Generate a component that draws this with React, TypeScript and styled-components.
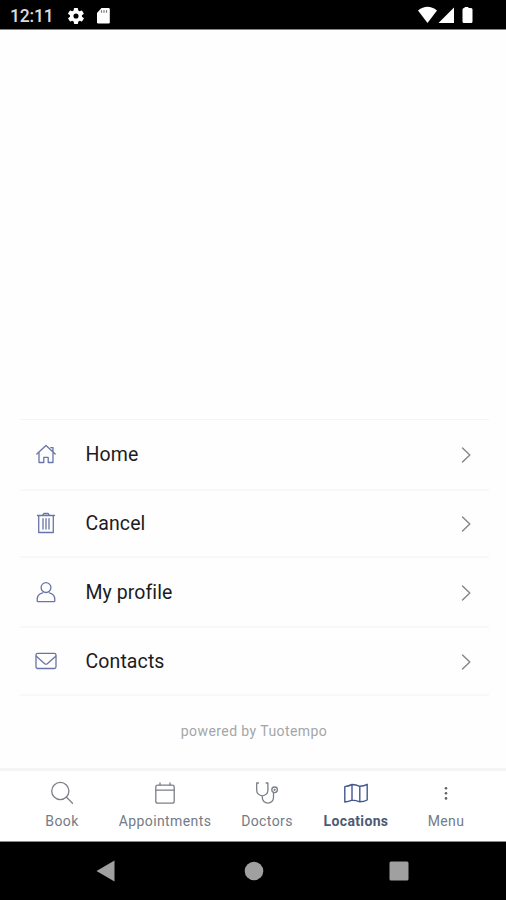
import React from "react";
import styled, { createGlobalStyle } from "styled-components";

const GlobalStyle = createGlobalStyle`
  * { box-sizing: border-box; }
  body { margin: 0; background: #fff; font-family: Roboto, "Liberation Sans", sans-serif; }
`;

const Screen = styled.div`
  display: flex;
  flex-direction: column;
  width: 506px;
  height: 900px;
  overflow: hidden;
  background: #fefefe;
`;

const StatusBar = styled.header`
  display: flex;
  justify-content: space-between;
  flex: 0 0 30px;
  height: 30px;
  background: #000;
  border-bottom: 1px solid #858585;
`;

const StatusLeft = styled.div`
  display: flex;
  align-items: center;
  padding: 2px 0 0 10px;
`;

const Clock = styled.span`
  width: 58px;
  color: #dcdcdc;
  font-size: 17.5px;
  font-weight: 500;
  line-height: 20px;
  letter-spacing: -0.2px;
`;

const Icon = styled.svg`
  display: block;
  flex: none;
  overflow: visible;
`;

const LineIcon = styled(Icon)`
  fill: none;
  stroke: currentColor;
  stroke-linecap: round;
  stroke-linejoin: round;
`;

const Content = styled.main`
  display: flex;
  flex-direction: column;
  justify-content: flex-end;
  flex: 1;
`;

const MenuList = styled.ul`
  list-style: none;
  margin: 0;
  padding: 0 17px 0 20px;
`;

const MenuRow = styled.li<{ $height: number; $first?: boolean }>`
  display: flex;
  align-items: center;
  height: ${(p) => p.$height}px;
  padding: 0 17px 0 14px;
  border-bottom: 2px solid #f8f8f8;
  ${(p) => p.$first && "border-top: 1px solid #f4f4f4;"}
`;

const RowIcon = styled.span`
  display: flex;
  width: 51.5px;
  padding-bottom: 1px;
  color: #6974a8;
`;

const RowLabel = styled.span<{ $spacing: number }>`
  flex: 1;
  padding-top: 1px;
  color: #1c1c1e;
  font-size: 19.5px;
  line-height: 24px;
  letter-spacing: ${(p) => p.$spacing}px;
`;

const Chevron = styled.span`
  display: flex;
  padding-top: 1px;
  color: #858585;
`;

const Powered = styled.p`
  height: 72px;
  margin: 0;
  padding: 25px 0 0 2px;
  color: #a3a6a8;
  font-size: 14px;
  line-height: 20px;
  letter-spacing: 0.43px;
  text-align: center;
`;

const TabBar = styled.nav`
  display: grid;
  grid-template-columns: 104px 102px 102px 76px 104px;
  flex: 0 0 74px;
  padding: 10px 0 0 10px;
  background: #fff;
  border-top: 3px solid #f4f4f4;
  border-bottom: 1px solid #8a8a8a;
`;

const Tab = styled.div<{ $active?: boolean }>`
  display: flex;
  flex-direction: column;
  align-items: center;
  gap: 7px;
  color: ${(p) => (p.$active ? "#44578f" : "#7b7f86")};
`;

const TabLabel = styled.span<{ $active?: boolean; $spacing: number }>`
  color: ${(p) => (p.$active ? "#4d5a75" : "#737b86")};
  font-size: 14px;
  font-weight: ${(p) => (p.$active ? 700 : 400)};
  line-height: 18px;
  letter-spacing: ${(p) => p.$spacing}px;
  white-space: nowrap;
`;

const SystemNav = styled.footer`
  display: flex;
  align-items: center;
  justify-content: space-between;
  flex: 0 0 58px;
  padding: 0 97px 0 96px;
  background: #000;
  color: #a0a0a0;
`;

const HomeIcon = () => (
  <LineIcon width="24" height="24" viewBox="0 0 24 24" strokeWidth="1.3">
    <path d="M2.800 12 12 3.500l9.200 8.500M5 10.500v10h4.800v-5.200h4.400v5.200H19v-10M16.800 5.600h2.200v3.800" />
  </LineIcon>
);

const TrashIcon = () => (
  <LineIcon width="24" height="24" viewBox="0 0 24 24" strokeWidth="1.3">
    <path d="M3.500 4.500h17M8.700 4.200 9.800 2.500h4.400l1.100 1.700M4.700 4.500v17h14.600v-17M9 7.700v10.300M12 7.700v10.300M15 7.700v10.300" />
  </LineIcon>
);

const ProfileIcon = () => (
  <LineIcon width="24" height="24" viewBox="0 0 24 24" strokeWidth="1.3">
    <circle cx="12" cy="7.600" r="4.900" />
    <path d="M8.700 12.900C5.200 13.600 3.200 16 3.200 19.500v1.200q0 .9.900.900h15.800q.9 0 .9-.900v-1.200c0-3.500-2-5.900-5.500-6.600" />
  </LineIcon>
);

const MailIcon = () => (
  <LineIcon width="24" height="24" viewBox="0 0 24 24" strokeWidth="1.3">
    <rect x="2" y="4.300" width="20" height="15.200" rx="1.800" />
    <path d="m2.300 7.300 8.400 7.400q1.300 1 2.600 0l8.400-7.400" />
  </LineIcon>
);

const SearchIcon = () => (
  <LineIcon width="24" height="24" viewBox="0 0 24 24" strokeWidth="1.3">
    <circle cx="10.300" cy="10" r="8.600" />
    <path d="m16.500 16.200 6 6" />
  </LineIcon>
);

const CalendarIcon = () => (
  <LineIcon width="24" height="24" viewBox="0 0 24 24" strokeWidth="1.3">
    <rect x="2.800" y="4.200" width="18.400" height="18" rx="2" />
    <path d="M2.800 9.200h18.400M7 2v2.200M17 2v2.200" />
  </LineIcon>
);

const StethoscopeIcon = () => (
  <LineIcon width="24" height="24" viewBox="0 0 24 24" strokeWidth="1.3">
    <path d="M3.500 2H1.700v7.200a5.600 5.600 0 0 0 11.200 0V2h-1.800M7.300 14.800v1.700a5.600 5.600 0 0 0 11.200 0v-4.800" />
    <circle cx="19.600" cy="8.800" r="2.800" />
    <circle cx="19.600" cy="8.800" r=".5" />
  </LineIcon>
);

const MapIcon = () => (
  <LineIcon width="24" height="24" viewBox="0 0 24 24" strokeWidth="1.400">
    <path d="M.8 5.600Q4.500 5.200 8 3.500Q12 3.800 15.800 5.300Q20 5 23.200 3.300V19Q20 20.800 15.800 20.800Q12 19.400 8 19.100Q4.500 20.600.8 21zM8 3.500v15.600M15.800 5.300v15.500" />
  </LineIcon>
);

const DotsIcon = () => (
  <Icon width="24" height="24" viewBox="0 0 24 24" fill="#5f6368">
    <circle cx="12" cy="7.200" r="1.300" />
    <circle cx="12" cy="12.300" r="1.300" />
    <circle cx="12" cy="17.400" r="1.300" />
  </Icon>
);

const menu = [
  { label: "Home", icon: <HomeIcon />, height: 72, spacing: 0.1 },
  { label: "Cancel", icon: <TrashIcon />, height: 67, spacing: 0.1 },
  { label: "My profile", icon: <ProfileIcon />, height: 70, spacing: 0.07 },
  { label: "Contacts", icon: <MailIcon />, height: 68, spacing: 0.1 },
];

const tabs = [
  { label: "Book", icon: <SearchIcon />, spacing: 0.4 },
  { label: "Appointments", icon: <CalendarIcon />, spacing: 0.4 },
  { label: "Doctors", icon: <StethoscopeIcon />, spacing: 0.4 },
  { label: "Locations", icon: <MapIcon />, spacing: 0.35, active: true },
  { label: "Menu", icon: <DotsIcon />, spacing: 0.4 },
];

export default function App() {
  return (
    <>
      <GlobalStyle />
      <Screen>
        <StatusBar>
          <StatusLeft>
            <Clock>12:11</Clock>
            <Icon width="16" height="16" viewBox="2 2 20 20" fill="#fff">
              <path d="M19.400 13a7.500 7.500 0 0 0 0-2l2.100-1.600a.5.5 0 0 0 .1-.7l-2-3.400a.5.5 0 0 0-.6-.2l-2.500 1a7 7 0 0 0-1.700-1l-.4-2.600a.5.5 0 0 0-.5-.5h-4a.5.5 0 0 0-.5.5L9 5.100a7 7 0 0 0-1.700 1l-2.500-1a.5.5 0 0 0-.6.200l-2 3.400a.5.5 0 0 0 .1.700L4.500 11a7.500 7.500 0 0 0 0 2l-2.100 1.600a.5.500 0 0 0-.1.700l2 3.400c.1.200.4.300.6.200l2.500-1a7 7 0 0 0 1.700 1l.4 2.600c0 .300.200.500.500.500h4c.3 0 .5-.2.500-.5l.4-2.600a7 7 0 0 0 1.700-1l2.500 1c.2.100.5 0 .6-.2l2-3.400a.5.500 0 0 0-.1-.7zM12 15.200a3.200 3.200 0 1 1 0-6.400 3.200 3.200 0 0 1 0 6.400z" />
            </Icon>
            <Icon width="35" height="18" viewBox="0 0 35 18">
              <path d="M17.500 1h7q1.300 0 1.300 1.300v13q0 1.300-1.300 1.300H14.300q-1.300 0-1.300-1.300V6z" fill="#fff" />
              <path d="M17.500 3.300v2.500M20 3.300v2.500M22.500 3.300v2.500" stroke="#777" strokeWidth="1.200" />
            </Icon>
          </StatusLeft>
          <Icon width="90" height="29" viewBox="0 0 90 29" fill="#fff">
            <path d="M2 10.500Q11.500 3 21 10.500L11.500 23z" />
            <path d="M38 7.500V23H22.500z" />
            <path d="M49 7h3q.5 0 .5.500V8h2.500q1.500 0 1.500 1.500v12q0 1.500-1.500 1.500h-7q-1.500 0-1.500-1.500v-12Q46.500 8 48 8h.5v-.500q0-.500.500-.500z" />
          </Icon>
        </StatusBar>
        <Content>
          <MenuList>
            {menu.map((item, i) => (
              <MenuRow key={item.label} $height={item.height} $first={i === 0}>
                <RowIcon>{item.icon}</RowIcon>
                <RowLabel $spacing={item.spacing}>{item.label}</RowLabel>
                <Chevron>
                  <LineIcon width="12" height="18" viewBox="0 0 12 18" strokeWidth="1.400">
                    <path d="m2.500 2 7.300 7-7.300 7" />
                  </LineIcon>
                </Chevron>
              </MenuRow>
            ))}
          </MenuList>
          <Powered>powered by Tuotempo</Powered>
        </Content>
        <TabBar>
          {tabs.map((tab) => (
            <Tab key={tab.label} $active={tab.active}>
              {tab.icon}
              <TabLabel $active={tab.active} $spacing={tab.spacing}>{tab.label}</TabLabel>
            </Tab>
          ))}
        </TabBar>
        <SystemNav>
          <Icon width="22" height="22" viewBox="0 0 22 22" fill="currentColor">
            <path d="M.5 11 18.500 .5v21z" />
          </Icon>
          <Icon width="20" height="20" viewBox="0 0 20 20" fill="currentColor">
            <circle cx="10" cy="10" r="9.300" />
          </Icon>
          <Icon width="20" height="20" viewBox="0 0 20 20" fill="currentColor">
            <rect x=".5" y=".5" width="19" height="19" rx="1.500" />
          </Icon>
        </SystemNav>
      </Screen>
    </>
  );
}
